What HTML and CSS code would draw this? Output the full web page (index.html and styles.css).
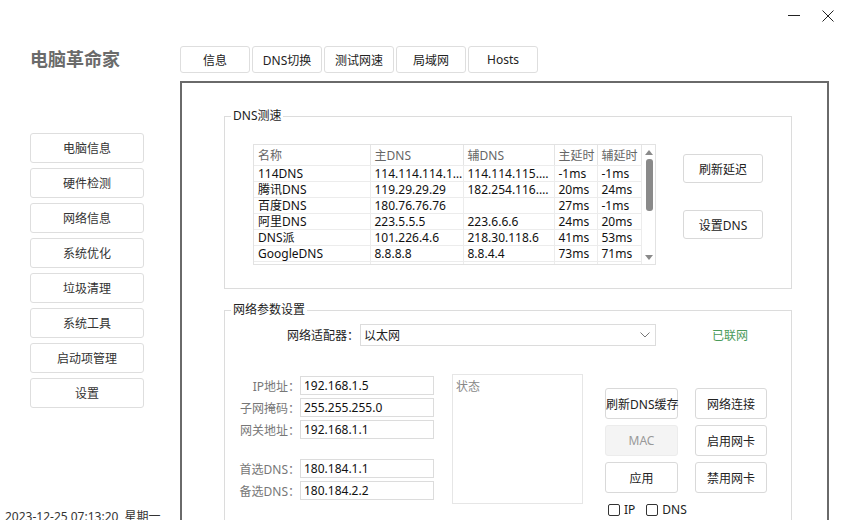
FILE: index.html
```html
<!DOCTYPE html>
<html lang="zh-CN">
<head>
    <meta charset="UTF-8">
    <title>电脑革命家</title>
    <link rel="stylesheet" href="styles.css">
</head>
<body>
    <div class="app">
        <aside class="side">
            <h1 class="brand">电脑革命家</h1>
            <nav class="menu">
                <button class="menu-btn">电脑信息</button>
                <button class="menu-btn">硬件检测</button>
                <button class="menu-btn">网络信息</button>
                <button class="menu-btn">系统优化</button>
                <button class="menu-btn">垃圾清理</button>
                <button class="menu-btn">系统工具</button>
                <button class="menu-btn">启动项管理</button>
                <button class="menu-btn">设置</button>
            </nav>
            <div class="clock">2023-12-25 07:13:20&nbsp; 星期一</div>
        </aside>

        <main class="content">
            <div class="tabs">
                <button class="tab">信息</button>
                <button class="tab">DNS切换</button>
                <button class="tab">测试网速</button>
                <button class="tab">局域网</button>
                <button class="tab">Hosts</button>
            </div>

            <section class="panel">
                <fieldset class="group dns-group">
                    <legend>DNS测速</legend>
                    <div class="dns-body">
                        <div class="grid-wrap">
                            <table class="grid">
                                <colgroup>
                                    <col style="width:116px">
                                    <col style="width:93px">
                                    <col style="width:91px">
                                    <col style="width:43px">
                                    <col style="width:44px">
                                </colgroup>
                                <thead>
                                    <tr><th>名称</th><th>主DNS</th><th>辅DNS</th><th>主延时</th><th>辅延时</th></tr>
                                </thead>
                                <tbody>
                                    <tr><td>114DNS</td><td>114.114.114.114</td><td>114.114.115.115</td><td>-1ms</td><td>-1ms</td></tr>
                                    <tr><td>腾讯DNS</td><td>119.29.29.29</td><td>182.254.116.116</td><td>20ms</td><td>24ms</td></tr>
                                    <tr><td>百度DNS</td><td>180.76.76.76</td><td></td><td>27ms</td><td>-1ms</td></tr>
                                    <tr><td>阿里DNS</td><td>223.5.5.5</td><td>223.6.6.6</td><td>24ms</td><td>20ms</td></tr>
                                    <tr><td>DNS派</td><td>101.226.4.6</td><td>218.30.118.6</td><td>41ms</td><td>53ms</td></tr>
                                    <tr><td>GoogleDNS</td><td>8.8.8.8</td><td>8.8.4.4</td><td>73ms</td><td>71ms</td></tr>
                                    <tr><td></td><td></td><td></td><td></td><td></td></tr>
                                </tbody>
                            </table>
                            <div class="vscroll">
                                <span class="arrow-up"></span>
                                <span class="thumb"></span>
                                <span class="arrow-down"></span>
                            </div>
                        </div>
                        <div class="dns-actions">
                            <button class="btn btn-wide">刷新延迟</button>
                            <button class="btn btn-wide">设置DNS</button>
                        </div>
                    </div>
                </fieldset>

                <fieldset class="group net-group">
                    <legend>网络参数设置</legend>
                    <div class="adapter-row">
                        <label class="adapter-label">网络适配器：</label>
                        <div class="select">
                            <span>以太网</span>
                            <svg width="10" height="6" viewBox="0 0 10 6"><path d="M0.5 0.5 L5 5 L9.5 0.5" fill="none" stroke="#777" stroke-width="1"/></svg>
                        </div>
                        <span class="online">已联网</span>
                    </div>

                    <div class="net-main">
                        <div class="form">
                            <div class="row"><label>IP地址：</label><input class="field" value="192.168.1.5"></div>
                            <div class="row"><label>子网掩码：</label><input class="field" value="255.255.255.0"></div>
                            <div class="row"><label>网关地址：</label><input class="field" value="192.168.1.1"></div>
                            <div class="row row-gap"><label>首选DNS：</label><input class="field" value="180.184.1.1"></div>
                            <div class="row"><label>备选DNS：</label><input class="field" value="180.184.2.2"></div>
                        </div>
                        <div class="status">状态</div>
                        <div class="actions">
                            <button class="btn">刷新DNS缓存</button>
                            <button class="btn">网络连接</button>
                            <button class="btn btn-off">MAC</button>
                            <button class="btn">启用网卡</button>
                            <button class="btn">应用</button>
                            <button class="btn">禁用网卡</button>
                            <div class="checks">
                                <label class="check"><input type="checkbox">IP</label>
                                <label class="check"><input type="checkbox">DNS</label>
                            </div>
                        </div>
                    </div>
                </fieldset>
            </section>
        </main>
    </div>

    <div class="winctl">
        <svg width="12" height="12" viewBox="0 0 12 12"><path d="M0 5.5 H12" stroke="#222" stroke-width="1"/></svg>
        <svg width="12" height="12" viewBox="0 0 12 12"><path d="M0.5 0.5 L11.5 11.5 M11.5 0.5 L0.5 11.5" stroke="#222" stroke-width="1"/></svg>
    </div>
</body>
</html>
```

FILE: styles.css
```css
body {
    margin: 0;
    width: 846px;
    height: 520px;
    overflow: hidden;
    position: relative;
    font-family: "Noto Sans", "Noto Sans CJK SC", sans-serif;
    font-size: 12px;
    color: #222;
    background: #fff;
}
button, input {
    font-family: inherit;
    font-size: 12px;
}
.app {
    display: flex;
    height: 520px;
}
.side {
    width: 180px;
    flex: none;
    padding-left: 30px;
    box-sizing: border-box;
    display: flex;
    flex-direction: column;
}
.brand {
    margin: 46px 0 0;
    font-family: "Noto Sans CJK SC", sans-serif;
    font-size: 18px;
    line-height: 24px;
    font-weight: bold;
    color: #6b6b6b;
}
.menu {
    margin-top: 63px;
    width: 114px;
    display: flex;
    flex-direction: column;
    gap: 5px;
}
.menu-btn {
    height: 30px;
    border: 1px solid #dedede;
    border-radius: 3px;
    background: #fff;
    color: #333;
    padding: 0;
}
.clock {
    margin: 101px 0 0 -25px;
    line-height: 16px;
    white-space: nowrap;
    color: #333;
}
.content {
    flex: none;
    width: 649px;
    padding-top: 46px;
}
.tabs {
    display: flex;
    gap: 2px;
}
.tab {
    width: 70px;
    height: 27px;
    border: 1px solid #dedede;
    border-radius: 3px;
    background: #fff;
    color: #222;
    padding: 0;
}
.panel {
    margin-top: 8px;
    height: 470px;
    box-sizing: border-box;
    border: 2px solid #6a6a6a;
    padding: 0 35px 0 42px;
}
.group {
    margin: 0;
    padding: 0;
    min-width: 0;
    border: 1px solid #dcdcdc;
}
.group legend {
    margin-left: 6px;
    padding: 0 2px;
    line-height: 16px;
    color: #222;
}
.dns-group {
    margin-top: 25px;
}
.dns-body {
    display: flex;
    padding: 20px 0 23px 28px;
}
.grid-wrap {
    width: 403px;
    height: 121px;
    box-sizing: border-box;
    border: 1px solid #e2e2e2;
    display: flex;
    overflow: hidden;
}
.grid {
    width: 387px;
    table-layout: fixed;
    border-collapse: collapse;
    align-self: flex-start;
}
.grid th, .grid td {
    padding: 0 0 0 4px;
    border-right: 1px solid #ececec;
    border-bottom: 1px solid #ececec;
    text-align: left;
    white-space: nowrap;
    overflow: hidden;
    text-overflow: ellipsis;
    font-weight: normal;
}
.grid th {
    height: 20px;
    color: #666;
    border-right-color: #e4e4e4;
}
.grid td {
    height: 15px;
    line-height: 15px;
    color: #111;
}
.vscroll {
    width: 14px;
    flex: none;
    display: flex;
    flex-direction: column;
    align-items: center;
    padding: 5px 0 4px 1px;
    box-sizing: border-box;
}
.arrow-up, .arrow-down {
    width: 0;
    height: 0;
    border-left: 4px solid transparent;
    border-right: 4px solid transparent;
}
.arrow-up {
    border-bottom: 5px solid #8a8a8a;
}
.arrow-down {
    margin-top: auto;
    border-top: 5px solid #8a8a8a;
}
.thumb {
    width: 7px;
    height: 52px;
    margin-top: 4px;
    border-radius: 3px;
    background: #8a8a8a;
}
.dns-actions {
    margin: 10px 0 0 27px;
    display: flex;
    flex-direction: column;
    gap: 27px;
}
.btn {
    height: 31px;
    border: 1px solid #d9d9d9;
    border-radius: 3px;
    background: #fff;
    color: #222;
    padding: 0;
    white-space: nowrap;
}
.btn-wide {
    width: 80px;
    height: 29px;
}
.btn-off {
    background: #f4f4f4;
    border-color: #ececec;
    color: #999;
}
.net-group {
    margin-top: 13px;
    height: 240px;
}
.adapter-row {
    display: flex;
    align-items: center;
    height: 22px;
    margin-top: 6px;
    padding-left: 62px;
}
.adapter-label {
    width: 72px;
    color: #222;
}
.select {
    width: 296px;
    height: 22px;
    margin-left: 1px;
    box-sizing: border-box;
    border: 1px solid #dcdcdc;
    display: flex;
    align-items: center;
    justify-content: space-between;
    padding: 0 5px 0 3px;
}
.online {
    margin-left: 56px;
    color: #4a9a5a;
}
.net-main {
    display: flex;
    align-items: flex-start;
    margin-top: 28px;
}
.form {
    margin: 2px 0 0 11px;
    display: flex;
    flex-direction: column;
    gap: 3px;
}
.row {
    display: flex;
    align-items: center;
}
.row label {
    width: 64px;
    text-align: right;
    color: #777;
}
.row-gap {
    margin-top: 17px;
}
.field {
    width: 134px;
    height: 19px;
    box-sizing: border-box;
    border: 1px solid #dcdcdc;
    padding: 0 3px;
    color: #111;
    outline: none;
}
.status {
    width: 131px;
    height: 130px;
    margin-left: 18px;
    box-sizing: border-box;
    border: 1px solid #e6e6e6;
    padding: 2px 3px;
    color: #888;
}
.actions {
    margin: 14px 0 0 22px;
    display: grid;
    grid-template-columns: 73px 72px;
    column-gap: 17px;
    row-gap: 6px;
}
.checks {
    display: flex;
    gap: 11px;
    margin: 2px 0 0 3px;
    white-space: nowrap;
}
.check {
    display: flex;
    align-items: center;
    gap: 4px;
    color: #222;
}
.check input {
    appearance: none;
    margin: 0;
    width: 12px;
    height: 12px;
    border: 1px solid #333;
    border-radius: 2px;
    background: #fff;
}
.winctl {
    position: absolute;
    top: 10px;
    right: 12px;
    display: flex;
    gap: 22px;
}
```
